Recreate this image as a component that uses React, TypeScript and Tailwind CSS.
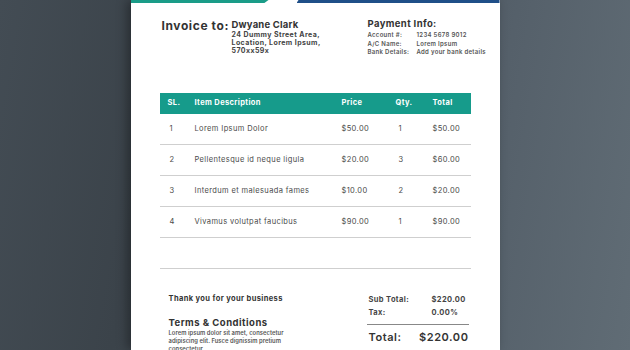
const items = [
  { sl: 1, desc: 'Lorem Ipsum Dolor', price: '$50.00', qty: 1, total: '$50.00' },
  { sl: 2, desc: 'Pellentesque id neque ligula', price: '$20.00', qty: 3, total: '$60.00' },
  { sl: 3, desc: 'Interdum et malesuada fames', price: '$10.00', qty: 2, total: '$20.00' },
  { sl: 4, desc: 'Vivamus volutpat faucibus', price: '$90.00', qty: 1, total: '$90.00' },
]

const payment = [
  ['Account #:', '1234 5678 9012'],
  ['A/C Name:', 'Lorem Ipsum'],
  ['Bank Details:', 'Add your bank details'],
]

export default function App() {
  return (
    <div className="h-[350px] w-[630px] overflow-hidden flex justify-center bg-[linear-gradient(100deg,#434c54_0%,#3b434a_25%,#55606a_75%,#606c75_100%)] font-['Inter',sans-serif]">
      <div className="w-[369px] shrink-0 bg-white flex flex-col shadow-[-4px_0_10px_rgba(0,0,0,0.35)]">
        {/* top strip */}
        <div className="flex h-[3px] shrink-0">
          <div className="w-[138px] bg-[#1a9c88] [clip-path:polygon(0_0,100%_0,97%_100%,0_100%)]" />
          <div className="w-[28px]" />
          <div className="flex-1 bg-[#1f4f88] [clip-path:polygon(1%_0,100%_0,100%_100%,0_100%)]" />
        </div>

        <div className="px-[29px]">
          {/* Header */}
          <div className="flex items-start pt-[15px] pl-[2px] text-[#333] whitespace-nowrap">
            <div className="w-[70px] shrink-0 text-[12px] leading-[16px] font-bold tracking-[0.05em]">Invoice to:</div>
            <div className="w-[136px] shrink-0 pt-[1px]">
              <div className="text-[9.5px] leading-[12px] font-bold tracking-[0.02em]">Dwyane Clark</div>
              <div className="text-[7px] leading-[8px] font-bold tracking-[0.06em] text-[#444]">
                <div>24 Dummy Street Area,</div>
                <div>Location, Lorem Ipsum,</div>
                <div>570xx59x</div>
              </div>
            </div>
            <div className="shrink-0">
              <div className="text-[9.5px] leading-[12px] font-bold tracking-[0.04em]">Payment Info:</div>
              <div className="mt-[1px] text-[6px] leading-[8.5px] font-semibold tracking-[0.05em] text-[#555]">
                {payment.map(([k, v]) => (
                  <div key={k} className="flex">
                    <span className="w-[49px] shrink-0">{k}</span>
                    <span>{v}</span>
                  </div>
                ))}
              </div>
            </div>
          </div>

          {/* Table */}
          <div className="mt-[36px] text-[7.5px] tracking-[0.05em]">
            <div className="flex items-center h-[21px] pl-[8px] bg-[#169b8b] text-white font-bold">
              <span className="w-[27px]">SL.</span>
              <span className="w-[147px]">Item Description</span>
              <span className="w-[54px]">Price</span>
              <span className="w-[37px]">Qty.</span>
              <span>Total</span>
            </div>
            {items.map((it) => (
              <div key={it.sl} className="flex items-center h-[31px] pl-[8px] border-b border-[#cfcfcf] text-[#4a4a4a]">
                <span className="w-[27px] pl-[2px]">{it.sl}</span>
                <span className="w-[147px]">{it.desc}</span>
                <span className="w-[54px]">{it.price}</span>
                <span className="w-[37px] pl-[3px]">{it.qty}</span>
                <span>{it.total}</span>
              </div>
            ))}
            <div className="h-[31px] border-b border-[#cfcfcf]" />
          </div>

          {/* Footer */}
          <div className="flex justify-between pl-[9px] pr-[2px] text-[#333]">
            <div className="pt-[25px] whitespace-nowrap">
              <div className="text-[7.5px] leading-[10px] font-bold tracking-[0.05em]">Thank you for your business</div>
              <div className="mt-[13px] text-[9.5px] leading-[12px] font-bold tracking-[0.05em]">Terms &amp; Conditions</div>
              <div className="text-[5.8px] leading-[8px] font-semibold tracking-[0.01em] text-[#555]">
                <div>Lorem ipsum dolor sit amet, consectetur</div>
                <div>adipiscing elit. Fusce dignissim pretium</div>
                <div>consectetur</div>
              </div>
            </div>
            <div className="w-[102px] pt-[24px]">
              <div className="pl-[2px] text-[7.5px] leading-[13px] font-bold tracking-[0.05em] text-[#444]">
                <div className="flex">
                  <span className="w-[63px]">Sub Total:</span>
                  <span>$220.00</span>
                </div>
                <div className="flex">
                  <span className="w-[63px]">Tax:</span>
                  <span>0.00%</span>
                </div>
              </div>
              <div className="mt-[5px] border-t border-[#888]" />
              <div className="flex pl-[2px] pt-[5px] text-[11px] leading-[14px] font-semibold tracking-[0.05em] text-[#333]">
                <span className="w-[57px]">Total:</span>
                <span>$220.00</span>
              </div>
            </div>
          </div>
        </div>
      </div>
    </div>
  )
}
